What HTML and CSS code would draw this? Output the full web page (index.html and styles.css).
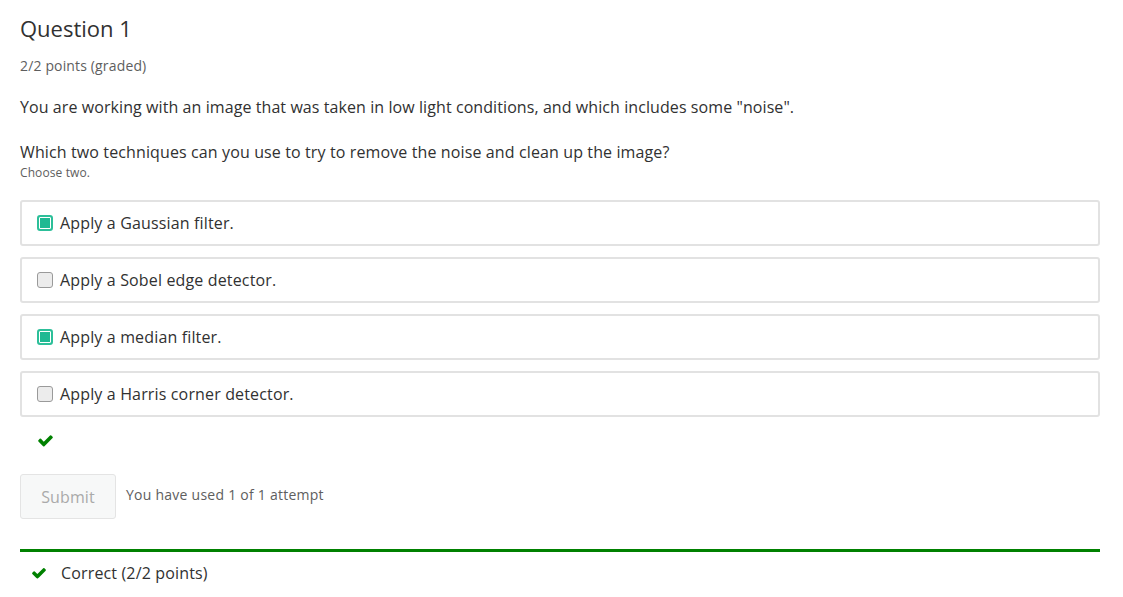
FILE: index.html
```html
<!DOCTYPE html>
<html>
<head>
<meta charset="utf-8">
<link rel="stylesheet" href="styles.css">
</head>
<body>
<div class="problem">
  <h3 class="title">Question 1</h3>
  <div class="points">2/2 points (graded)</div>
  <p class="prompt">You are working with an image that was taken in low light conditions, and which includes some "noise".</p>
  <p class="question">Which two techniques can you use to try to remove the noise and clean up the image?</p>
  <div class="hint">Choose two.</div>
  <div class="choices">
    <label class="choice"><span class="box checked"></span><span>Apply a Gaussian filter.</span></label>
    <label class="choice"><span class="box"></span><span>Apply a Sobel edge detector.</span></label>
    <label class="choice"><span class="box checked"></span><span>Apply a median filter.</span></label>
    <label class="choice"><span class="box"></span><span>Apply a Harris corner detector.</span></label>
  </div>
  <div class="status">
    <svg class="check" viewBox="0 0 1792 1792" width="17" height="17"><path fill="#008100" d="M1671 566q0 40-28 68l-724 724-136 136q-28 28-68 28t-68-28l-136-136-362-362q-28-28-28-68t28-68l136-136q28-28 68-28t68 28l294 295 656-657q28-28 68-28t68 28l136 136q28 28 28 68z"/></svg>
  </div>
  <div class="actions">
    <button class="submit">Submit</button>
    <span class="attempts">You have used 1 of 1 attempt</span>
  </div>
  <div class="notification">
    <svg class="check" viewBox="0 0 1792 1792" width="16" height="16"><path fill="#008100" d="M1671 566q0 40-28 68l-724 724-136 136q-28 28-68 28t-68-28l-136-136-362-362q-28-28-28-68t28-68l136-136q28-28 68-28t68 28l294 295 656-657q28-28 68-28t68 28l136 136q28 28 28 68z"/></svg>
    <span class="msg">Correct (2/2 points)</span>
  </div>
</div>
</body>
</html>
```
FILE: styles.css
```css
html, body {
  margin: 0;
  padding: 0;
  background: #fff;
}
body {
  font-family: "Open Sans", "Liberation Sans", sans-serif;
  color: #313131;
}
.problem {
  width: 1080px;
  padding: 12px 20px 0 20px;
}
.title {
  margin: 0;
  font-size: 22px;
  font-weight: 400;
  line-height: 32px;
  color: #313131;
}
.points {
  margin-top: 12px;
  font-size: 14px;
  line-height: 20px;
  letter-spacing: 0.15px;
  color: #5e5e5e;
}
.prompt {
  margin: 20px 0 0 0;
  font-size: 16px;
  line-height: 22px;
  letter-spacing: 0.08px;
}
.question {
  margin: 23px 0 0 0;
  font-size: 16px;
  line-height: 22px;
  letter-spacing: 0.12px;
}
.hint {
  margin-top: 1px;
  font-size: 12px;
  line-height: 17px;
  letter-spacing: 0.1px;
  color: #5e5e5e;
}
.choices {
  margin-top: 19px;
  display: flex;
  flex-direction: column;
  gap: 11px;
}
.choice {
  display: flex;
  align-items: center;
  height: 46px;
  box-sizing: border-box;
  border: 2px solid #e2e2e2;
  border-radius: 3px;
  padding-left: 15px;
  font-size: 16px;
  letter-spacing: 0.15px;
}
.box {
  width: 16px;
  height: 16px;
  box-sizing: border-box;
  border: 1px solid #9a9a9a;
  border-radius: 3px;
  background: #ececec;
  margin-right: 7px;
  flex: none;
}
.box.checked {
  border: 2px solid #2cbf99;
  background: #1fb993;
  box-shadow: inset 0 0 0 1px #fff;
}
.status {
  height: 46px;
  padding-left: 17px;
  display: flex;
  align-items: center;
}
.actions {
  margin-top: 11px;
  display: flex;
  align-items: center;
}
.submit {
  width: 96px;
  height: 45px;
  border: 1px solid #e4e4e4;
  border-radius: 3px;
  background: #f7f8f8;
  color: #aaaaaa;
  font-family: "Open Sans", "Liberation Sans", sans-serif;
  font-size: 16px;
  letter-spacing: 0.1px;
  padding: 0;
}
.attempts {
  margin-left: 10px;
  font-size: 14px;
  letter-spacing: 0.25px;
  color: #5e5e5e;
  position: relative;
  top: -2px;
}
.notification {
  margin-top: 30px;
  border-top: 3px solid #008100;
  display: flex;
  align-items: center;
  height: 41px;
  padding-left: 11px;
}
.msg {
  margin-left: 14px;
  font-size: 16px;
  letter-spacing: 0.15px;
}
```
